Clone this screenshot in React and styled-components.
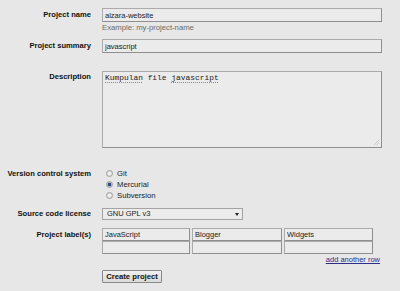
import React from 'react'
import styled, { createGlobalStyle } from 'styled-components'

const GlobalStyle = createGlobalStyle`
  html, body {
    margin: 0;
    padding: 0;
    background: #e7e7e7;
  }
  body {
    font-family: "Liberation Sans", Arial, sans-serif;
    font-size: 8px;
    line-height: 1;
    color: #1a1a1a;
  }
`

const Form = styled.form`
  width: 400px;
  height: 291px;
  padding-top: 8px;
  box-sizing: border-box;
  overflow: hidden;
`

const Row = styled.div`
  display: grid;
  grid-template-columns: 91px 280px;
  column-gap: 11px;
  align-items: start;
  margin-top: ${(p) => p.$gap || 0}px;
`

const Label = styled.div`
  text-align: right;
  font-weight: bold;
  font-size: 7.6px;
  line-height: ${(p) => p.$lh || 14}px;
  padding-top: ${(p) => p.$pt || 0}px;
  white-space: nowrap;
  color: #111;
`

const TextInput = styled.input`
  display: block;
  box-sizing: border-box;
  width: ${(p) => p.$w || 280}px;
  height: ${(p) => p.$h || 14}px;
  margin: 0;
  padding: 0 2px;
  font-family: "Liberation Sans", Arial, sans-serif;
  font-size: 7.5px;
  color: #1a1a1a;
  background: #ebebeb;
  border: 1px solid #ababab;
  border-bottom-color: #8f8f8f;
  border-right-color: #8f8f8f;
  outline: none;
`

const Hint = styled.div`
  font-size: 7.7px;
  line-height: 9px;
  margin-top: 1px;
  color: #6a6a6a;
`

const TextArea = styled.div`
  position: relative;
  box-sizing: border-box;
  width: 280px;
  height: 77px;
  padding: 1px 2px;
  background: #ebebeb;
  border: 1px solid #ababab;
  border-bottom-color: #8f8f8f;
  border-right-color: #8f8f8f;
  font-family: "Liberation Mono", "Courier New", monospace;
  font-size: 7.9px;
  line-height: 10px;
  color: #222;
`

const Misspelled = styled.span`
  text-decoration: underline dotted rgba(210, 60, 60, 0.75);
  text-decoration-thickness: 1px;
  text-underline-offset: 1.5px;
`

const Grip = styled.svg`
  position: absolute;
  right: 1px;
  bottom: 1px;
`

const RadioList = styled.div`
  display: flex;
  flex-direction: column;
`

const RadioItem = styled.label`
  display: flex;
  align-items: center;
  gap: 4px;
  height: 11px;
  padding-left: 4px;
  font-size: 7.7px;
  color: #1a1a1a;
`

const RadioDot = styled.span`
  box-sizing: border-box;
  width: 7px;
  height: 7px;
  border-radius: 50%;
  border: 1px solid #a0a0a0;
  background: ${(p) =>
    p.$checked
      ? 'radial-gradient(circle, #2b4f86 0 1.6px, #9fb3cf 2px, #dcdcdc 3px)'
      : 'radial-gradient(circle, #f2f2f2 0 1px, #cfcfcf 3px)'};
`

const SelectBox = styled.div`
  box-sizing: border-box;
  display: flex;
  align-items: center;
  justify-content: space-between;
  width: 141px;
  height: 12px;
  padding: 0 3px 0 4px;
  background: #ececec;
  border: 1px solid #a3a3a3;
  font-size: 7.5px;
  color: #1a1a1a;
`

const Arrow = styled.span`
  width: 0;
  height: 0;
  border-left: 2.5px solid transparent;
  border-right: 2.5px solid transparent;
  border-top: 3px solid #222;
`

const LabelGrid = styled.div`
  display: grid;
  grid-template-columns: 88px 90px 89px;
  column-gap: 2px;
`

const LinkRow = styled.div`
  width: 278px;
  text-align: right;
  font-size: 7.5px;
  line-height: 9px;
  margin-top: 1px;
`

const AddLink = styled.a`
  font-size: 7.5px;
  color: #2c2c8c;
  text-decoration: underline;
`

const SubmitButton = styled.button`
  display: block;
  box-sizing: border-box;
  width: 60px;
  height: 13px;
  margin: 0;
  padding: 0;
  font-family: "Liberation Sans", Arial, sans-serif;
  font-weight: bold;
  font-size: 7.7px;
  color: #111;
  background: linear-gradient(#f0f0f0, #dadada);
  border: 1px solid #8a8a8a;
  border-radius: 1px;
`

const labels = [
  ['JavaScript', 'Blogger', 'Widgets'],
  ['', '', ''],
]

const widths = [88, 90, 89]

const App = () => {
  return (
    <>
      <GlobalStyle />
      <Form onSubmit={(e) => e.preventDefault()}>
        <Row>
          <Label>Project name</Label>
          <div>
            <TextInput readOnly value="alzara-website" />
            <Hint>Example: my-project-name</Hint>
          </div>
        </Row>

        <Row $gap={7}>
          <Label>Project summary</Label>
          <TextInput readOnly value="javascript" />
        </Row>

        <Row $gap={18}>
          <Label $lh={9} $pt={1}>Description</Label>
          <TextArea>
            <Misspelled>Kumpulan</Misspelled> file <Misspelled>javascript</Misspelled>
            <Grip width="7" height="7" viewBox="0 0 7 7">
              <path d="M6 1 L1 6 M6 3.5 L3.5 6" stroke="#9a9a9a" strokeWidth="0.8" strokeDasharray="1 0.8" />
            </Grip>
          </TextArea>
        </Row>

        <Row $gap={20}>
          <Label $lh={11}>Version control system</Label>
          <RadioList>
            <RadioItem><RadioDot />Git</RadioItem>
            <RadioItem><RadioDot $checked />Mercurial</RadioItem>
            <RadioItem><RadioDot />Subversion</RadioItem>
          </RadioList>
        </Row>

        <Row $gap={7}>
          <Label $lh={12}>Source code license</Label>
          <SelectBox>
            <span>GNU GPL v3</span>
            <Arrow />
          </SelectBox>
        </Row>

        <Row $gap={8}>
          <Label $lh={13}>Project label(s)</Label>
          <div>
            {labels.map((row, i) => (
              <LabelGrid key={i}>
                {row.map((v, j) => (
                  <TextInput key={j} readOnly value={v} $w={widths[j]} $h={13} />
                ))}
              </LabelGrid>
            ))}
            <LinkRow>
              <AddLink href="#">add another row</AddLink>
            </LinkRow>
          </div>
        </Row>

        <Row $gap={6}>
          <div />
          <SubmitButton type="submit">Create project</SubmitButton>
        </Row>
      </Form>
    </>
  )
}

export default App
